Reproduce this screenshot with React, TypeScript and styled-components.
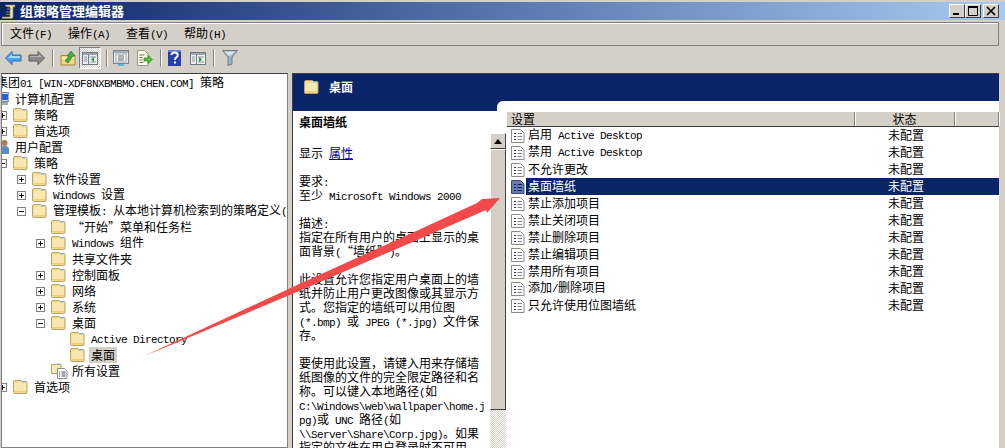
import styled, { createGlobalStyle } from "styled-components";

const GlobalStyle = createGlobalStyle`
  html, body {
    margin: 0;
    padding: 0;
    background: #d4d0c8;
  }
  body {
    font-family: "Noto Sans CJK SC", "Liberation Sans", sans-serif;
    font-size: 12px;
    color: #000000;
    text-spacing-trim: space-all;
  }
`;

const Window = styled.div`
  position: relative;
  width: 1005px;
  height: 448px;
  overflow: hidden;
  display: flex;
  flex-direction: column;
  background: #d4d0c8;
`;

const TitleBar = styled.div`
  height: 18px;
  margin-top: 2px;
  padding: 0 5px 0 2px;
  display: flex;
  align-items: center;
  gap: 4px;
  background: linear-gradient(90deg, #0a246a 0%, #a6caf0 100%);
  color: #ffffff;
  font-weight: 700;
  font-size: 13px;
`;

const TitleText = styled.span`
  flex: 1;
  line-height: 18px;
`;

const CaptionGroup = styled.div`
  display: flex;
  margin-right: 1px;
`;

const CaptionButton = styled.div<{ $gap?: boolean }>`
  width: 16px;
  height: 14px;
  margin-left: ${(p) => (p.$gap ? "2px" : "0")};
  box-sizing: border-box;
  background: #d4d0c8;
  border: 1px solid;
  border-color: #ffffff #404040 #404040 #ffffff;
  display: flex;
  align-items: center;
  justify-content: center;
`;

const MenuBar = styled.div`
  height: 22px;
  margin: 2px 6px 0 1px;
  display: flex;
  align-items: center;
  border: 1px solid #808080;
  box-shadow: inset 1px 1px 0 #ffffff;
`;

const MenuItem = styled.span`
  padding: 0 8px;
  line-height: 20px;
`;

const ToolBar = styled.div`
  height: 24px;
  margin-right: 6px;
  display: flex;
  align-items: center;
`;

const ToolIcon = styled.span<{ $gap: number }>`
  display: flex;
  margin-left: ${(p) => p.$gap}px;
`;

const PressedTool = styled.span<{ $gap: number }>`
  width: 22px;
  height: 22px;
  margin-left: ${(p) => p.$gap}px;
  box-sizing: border-box;
  display: flex;
  align-items: center;
  justify-content: center;
  border: 1px solid;
  border-color: #808080 #ffffff #ffffff #808080;
  background-color: #ffffff;
  background-image: repeating-conic-gradient(#d4d0c8 0 25%, #ffffff 0 50%);
  background-size: 2px 2px;
`;

const ToolSep = styled.span<{ $gap: number }>`
  width: 1px;
  height: 18px;
  margin-left: ${(p) => p.$gap}px;
  background: #808080;
  border-right: 1px solid #ffffff;
`;

const Body = styled.div`
  flex: 1;
  min-height: 0;
  margin: 3px 6px 0 1px;
  display: flex;
`;

const TreePane = styled.div`
  width: 285px;
  flex: none;
  background: #ffffff;
  border: 1px solid;
  border-color: #404040 #808080 #808080 #808080;
  overflow: hidden;
`;

const TreeList = styled.div`
  padding-top: 1px;
`;

const TreeRow = styled.div<{ $offset: number }>`
  height: 16px;
  margin-left: ${(p) => p.$offset}px;
  display: flex;
  align-items: center;
  white-space: nowrap;
`;

const Expander = styled.span`
  width: 9px;
  height: 9px;
  flex: none;
  margin-right: 6px;
  box-sizing: border-box;
  border: 1px solid #808080;
  background: #ffffff;
  display: flex;
  align-items: center;
  justify-content: center;
  position: relative;
`;

const ExpanderH = styled.i`
  width: 5px;
  height: 1px;
  background: #000000;
`;

const ExpanderV = styled.i`
  position: absolute;
  left: 3px;
  top: 1px;
  width: 1px;
  height: 5px;
  background: #000000;
`;

const ExpanderSpace = styled.span`
  width: 15px;
  flex: none;
`;

const TreeLabel = styled.span<{ $active?: boolean }>`
  margin-left: 4px;
  padding: 0 2px;
  line-height: 16px;
  background: ${(p) => (p.$active ? "#d4d0c8" : "transparent")};
`;

const RootLabel = styled.span`
  margin-left: -6px;
  line-height: 16px;
  white-space: nowrap;
`;

const Splitter = styled.div`
  width: 4px;
  flex: none;
  background: #d4d0c8;
`;

const ResultPane = styled.div`
  flex: 1;
  min-width: 0;
  display: flex;
  flex-direction: column;
  background: #0a246a;
  border: 1px solid #404040;
  border-width: 1px 0 0 1px;
`;

const PaneHeader = styled.div`
  height: 27px;
  flex: none;
  box-sizing: border-box;
  padding: 0 0 2px 11px;
  display: flex;
  align-items: center;
  gap: 10px;
  color: #ffffff;
  font-weight: 700;
`;

const Extended = styled.div`
  flex: 1;
  min-height: 0;
  display: flex;
`;

const Details = styled.div`
  width: 197px;
  flex: none;
  margin-top: 10px;
  padding: 3px 0 0 6px;
  box-sizing: border-box;
  background: #ffffff;
`;

const DetailTitle = styled.div`
  font-weight: 700;
  line-height: 16px;
  margin-bottom: 16px;
`;

const DetailLine = styled.div`
  height: 14px;
  line-height: 14px;
  white-space: nowrap;
`;

const DetailLink = styled.a`
  color: #000080;
  text-decoration: underline;
`;

const Gutter = styled.div`
  width: 16px;
  flex: none;
  display: flex;
  flex-direction: column;
  background: #ffffff;
`;

const GutterCap = styled.div`
  height: 10px;
  flex: none;
  margin-bottom: 22px;
  background: #0a246a;
  position: relative;

  &::after {
    content: "";
    position: absolute;
    left: 7px;
    right: 0;
    top: 0;
    bottom: 0;
    background: #ffffff;
    border-top-left-radius: 6px;
  }
`;

const ScrollButton = styled.div`
  height: 16px;
  flex: none;
  box-sizing: border-box;
  background: #d4d0c8;
  border: 1px solid;
  border-color: #ffffff #404040 #404040 #ffffff;
  display: flex;
  align-items: center;
  justify-content: center;
`;

const ScrollThumb = styled(ScrollButton)`
  height: 261px;
`;

const ScrollTrack = styled.div`
  flex: 1;
  background-color: #ffffff;
  background-image: repeating-conic-gradient(#d4d0c8 0 25%, #ffffff 0 50%);
  background-size: 2px 2px;
`;

const ListColumn = styled.div`
  flex: 1;
  min-width: 0;
  padding-top: 11px;
  background: #ffffff;
`;

const ListHeader = styled.div`
  height: 14px;
  margin-left: 1px;
  display: flex;
  border-bottom: 1px solid #404040;
  background: #d4d0c8;
`;

const HeaderCell = styled.div<{ $width: number; $center?: boolean }>`
  width: ${(p) => p.$width}px;
  flex: none;
  box-sizing: border-box;
  padding-left: ${(p) => (p.$center ? "0" : "4px")};
  text-align: ${(p) => (p.$center ? "center" : "left")};
  line-height: 14px;
  border-right: 1px solid #808080;
  box-shadow: 1px 0 0 #ffffff;
`;

const ListRow = styled.div`
  height: 17px;
  padding-left: 5px;
  display: flex;
  align-items: center;
`;

const RowBody = styled.div<{ $selected?: boolean }>`
  flex: 1;
  height: 17px;
  margin-left: 1px;
  padding: 0 0 1px 2px;
  box-sizing: border-box;
  display: flex;
  align-items: center;
  line-height: 16px;
  background: ${(p) => (p.$selected ? "#0a246a" : "transparent")};
  color: ${(p) => (p.$selected ? "#ffffff" : "#000000")};
`;

const SettingName = styled.span`
  width: 360px;
  flex: none;
`;

const Latin = styled.span`
  font-family: "Liberation Mono", monospace;
  font-size: 11px;
  letter-spacing: -0.6px;
  white-space: pre;
`;

const Overlay = styled.svg`
  position: absolute;
  left: 0;
  top: 0;
  pointer-events: none;
`;

// splits mixed text so ascii runs get the narrow mono font
const Mixed = ({ text }: { text: string }) => (
  <>
    {text.split(/([\x20-\x7e]+)/).map((part, i) =>
      i % 2 === 1 ? <Latin key={i}>{part}</Latin> : part
    )}
  </>
);

const FolderIcon = () => (
  <svg width="15" height="14" viewBox="0 0 15 14" style={{ flex: "none" }}>
    <path d="M0.5 2 Q0.5 0.5 2 0.5 H8.5 L9.5 1.5 H13 Q14 1.5 14 2.5 V12.5 Q14 13.5 13 13.5 H1.5 Q0.5 13.5 0.5 12.5Z" fill="#f6dc95" stroke="#b8a468" />
    <path d="M1.5 3 H13 V12.5 H1.5Z" fill="#fbe8b0" />
    <path d="M1.5 11 H13 V12.5 H1.5Z" fill="#eecb78" />
    <rect x="9" y="1" width="3" height="1.4" fill="#6fb1ea" />
  </svg>
);

const AllSettingsIcon = () => (
  <svg width="17" height="16" viewBox="0 0 17 16" style={{ flex: "none", marginRight: -2 }}>
    <path d="M0.5 1.5 H10 V10.5 H0.5Z" fill="#fbe8b0" stroke="#b8a468" />
    <rect x="6" y="0.5" width="3" height="1.4" fill="#6fb1ea" />
    <path d="M6.5 5.5 H13.5 L16 8 V15.5 H6.5Z" fill="#ffffff" stroke="#8a8a8a" />
    <path d="M8 9 h1 M10.5 9 h4 M8 11 h1 M10.5 11 h4 M8 13 h1 M10.5 13 h4" stroke="#444466" />
  </svg>
);

const PolicyIcon = ({ selected }: { selected?: boolean }) => (
  <svg width="14" height="15" viewBox="0 0 14 15" style={{ flex: "none" }}>
    <path d="M0.5 1.5 H9.5 L13 5 V14.5 H0.5Z" fill={selected ? "#6b7aa8" : "#ffffff"} stroke={selected ? "#3a4a80" : "#8a8a8a"} />
    <path d="M3 5.5 h2 M3 8.5 h2 M3 11.5 h2" stroke={selected ? "#0a246a" : "#303050"} />
    <path d="M6.5 5.5 h4.5 M6.5 8.5 h4.5 M6.5 11.5 h4.5" stroke={selected ? "#0a246a" : "#8080a0"} />
  </svg>
);

const ComputerIcon = () => (
  <svg width="7" height="14" viewBox="0 0 7 14" style={{ flex: "none" }}>
    <rect x="-3" y="0.5" width="10" height="9" fill="#d8d8e8" stroke="#808090" />
    <rect x="-2" y="2" width="8" height="6" fill="#2f62d8" />
    <rect x="-1" y="10" width="7" height="3" fill="#a8a8b8" />
  </svg>
);

const UserIcon = () => (
  <svg width="7" height="14" viewBox="0 0 7 14" style={{ flex: "none" }}>
    <circle cx="2.5" cy="3" r="3" fill="#b07a50" />
    <path d="M-2 14 V9 Q-2 6 2.5 6 Q7 6 7 9 V14Z" fill="#5c8cc4" />
  </svg>
);

const BackArrow = () => (
  <svg width="17" height="14" viewBox="0 0 17 14">
    <path d="M0.5 7 L7 0.5 V4 H16 V10 H7 V13.5Z" fill="#4aa3ee" stroke="#2a6cb0" />
    <path d="M3 7 L7 3 V5 H15 V7Z" fill="#a8dcff" />
  </svg>
);

const ForwardArrow = () => (
  <svg width="17" height="14" viewBox="0 0 17 14">
    <path d="M16.5 7 L10 0.5 V4 H1 V10 H10 V13.5Z" fill="#8a8a8a" stroke="#5a5a5a" />
    <path d="M2 5 H11 V3 L14 6 H2Z" fill="#b4b4b4" />
  </svg>
);

const UpFolderIcon = () => (
  <svg width="16" height="16" viewBox="0 0 16 16">
    <path d="M1 5.5 H15 V15 H1Z" fill="#f3d585" stroke="#a08848" />
    <path d="M2 7 H14 V9 H2Z" fill="#fbe8b0" />
    <path d="M5 11 L9 6 H7 L11 1 L15 6 H13 L8 13Z" fill="#3fae3f" stroke="#1f7a1f" strokeWidth="0.6" />
  </svg>
);

const PaneToggleIcon = ({ left }: { left?: boolean }) => (
  <svg width="16" height="13" viewBox="0 0 16 13">
    <rect x="0.5" y="0.5" width="15" height="12" fill="#eef0f4" stroke="#707880" />
    <rect x="1" y="1" width="14" height="2" fill="#9aa4ae" />
    <path d="M6.5 3 V12" stroke="#707880" />
    <path d="M2 5 h3 M2 7 h3 M2 9 h3 M8 5 h6 M8 10 h6" stroke="#8a94a0" />
    <path d={left ? "M12 5 L9 7.5 L12 10Z" : "M9 5 L12 7.5 L9 10Z"} fill="#1f9a3a" />
  </svg>
);

const PropertiesIcon = () => (
  <svg width="16" height="16" viewBox="0 0 16 16">
    <rect x="0.5" y="0.5" width="15" height="13" fill="#e8ecf2" stroke="#7a8490" />
    <rect x="1" y="1" width="14" height="2" fill="#a4aeb8" />
    <rect x="3" y="4" width="10" height="8" fill="#ffffff" stroke="#9aa4ae" />
    <path d="M5 6 h6 M5 8 h6 M5 10 h6" stroke="#5a6470" />
    <rect x="5" y="14" width="6" height="2" fill="#58b4e8" />
  </svg>
);

const ExportIcon = () => (
  <svg width="17" height="16" viewBox="0 0 17 16">
    <path d="M1.5 0.5 H8.5 L12 4 V15.5 H1.5Z" fill="#fffbe8" stroke="#9a9a88" />
    <path d="M3.5 5 h5 M3.5 7.5 h3 M3.5 10 h3 M3.5 12.5 h4" stroke="#6a6a60" />
    <path d="M8 8 H12 V5.5 L16.5 9.5 L12 13.5 V11 H8Z" fill="#58c03c" stroke="#2a8a20" strokeWidth="0.7" />
  </svg>
);

const HelpIcon = () => (
  <svg width="13" height="16" viewBox="0 0 13 16">
    <rect width="13" height="16" fill="#2a3fae" />
    <rect x="0" y="0" width="13" height="2" fill="#6a7fde" />
    <path d="M3.5 5 Q3.5 2.5 6.5 2.5 Q9.8 2.5 9.8 5 Q9.8 6.6 8 7.6 Q7 8.2 7 10" fill="none" stroke="#ffffff" strokeWidth="2" />
    <rect x="6" y="11.5" width="2" height="2" fill="#ffffff" />
  </svg>
);

const FilterIcon = () => (
  <svg width="16" height="16" viewBox="0 0 16 16">
    <path d="M0.5 0.5 H15.5 L10 7 V14 L6 15.5 V7Z" fill="#9fb2be" stroke="#6a7c88" />
    <path d="M2.5 1.5 H13 L9 5.5 H6Z" fill="#d8e4ea" />
  </svg>
);

interface TreeNode {
  level: number;
  label: string;
  expander?: "plus" | "minus";
  kind?: "computer" | "user" | "settings";
  active?: boolean;
}

const treeNodes: TreeNode[] = [
  { level: 0, label: "计算机配置", kind: "computer" },
  { level: 1, label: "策略", expander: "plus" },
  { level: 1, label: "首选项", expander: "plus" },
  { level: 0, label: "用户配置", kind: "user" },
  { level: 1, label: "策略", expander: "minus" },
  { level: 2, label: "软件设置", expander: "plus" },
  { level: 2, label: "Windows 设置", expander: "plus" },
  { level: 2, label: "管理模板: 从本地计算机检索到的策略定义(ADMX 文件)", expander: "minus" },
  { level: 3, label: "“开始”菜单和任务栏" },
  { level: 3, label: "Windows 组件", expander: "plus" },
  { level: 3, label: "共享文件夹" },
  { level: 3, label: "控制面板", expander: "plus" },
  { level: 3, label: "网络", expander: "plus" },
  { level: 3, label: "系统", expander: "plus" },
  { level: 3, label: "桌面", expander: "minus" },
  { level: 4, label: "Active Directory" },
  { level: 4, label: "桌面", active: true },
  { level: 3, label: "所有设置", kind: "settings" },
  { level: 1, label: "首选项", expander: "plus" },
];

const detailLines = [
  "",
  "要求:",
  "至少 Microsoft Windows 2000",
  "",
  "描述:",
  "指定在所有用户的桌面上显示的桌",
  "面背景(“墙纸”)。",
  "",
  "此设置允许您指定用户桌面上的墙",
  "纸并防止用户更改图像或其显示方",
  "式。您指定的墙纸可以用位图",
  "(*.bmp) 或 JPEG (*.jpg) 文件保",
  "存。",
  "",
  "要使用此设置\uff0c请键入用来存储墙",
  "纸图像的文件的完全限定路径和名",
  "称。可以键入本地路径(如",
  "C:\\Windows\\web\\wallpaper\\home.j",
  "pg)或 UNC 路径(如",
  "\\\\Server\\Share\\Corp.jpg)。如果",
  "指定的文件在用户登录时不可用\uff0c",
];

const settings = [
  "启用 Active Desktop",
  "禁用 Active Desktop",
  "不允许更改",
  "桌面墙纸",
  "禁止添加项目",
  "禁止关闭项目",
  "禁止删除项目",
  "禁止编辑项目",
  "禁用所有项目",
  "添加/删除项目",
  "只允许使用位图墙纸",
];

const TreeItem = ({ node }: { node: TreeNode }) => {
  // level 1 sits partly under the pane edge, the tree is scrolled sideways
  const offset = node.kind === "computer" || node.kind === "user" ? 0 : 19 * node.level - 23;
  return (
    <TreeRow $offset={offset}>
      {node.kind === "computer" && <ComputerIcon />}
      {node.kind === "user" && <UserIcon />}
      {!node.kind &&
        (node.expander ? (
          <Expander>
            <ExpanderH />
            {node.expander === "plus" && <ExpanderV />}
          </Expander>
        ) : (
          <ExpanderSpace />
        ))}
      {node.kind === "settings" && <ExpanderSpace />}
      {node.kind === "settings" ? <AllSettingsIcon /> : node.level > 0 && <FolderIcon />}
      <TreeLabel $active={node.active}>
        <Mixed text={node.label} />
      </TreeLabel>
    </TreeRow>
  );
};

const App = () => (
  <Window>
    <GlobalStyle />
    <TitleBar>
      <svg width="14" height="15" viewBox="0 0 14 15">
        <path d="M3 1 H13 V3 H11 V13 Q11 14.5 9 14.5 H1 Q0 14.5 0 13 H8 V3 Q3 3 3 1Z" fill="#f2e4b8" stroke="#8a7a48" strokeWidth="0.7" />
        <path d="M5 5 h4 M4 8 h4 M4 10.5 h4" stroke="#8a7a48" />
      </svg>
      <TitleText>组策略管理编辑器</TitleText>
      <CaptionGroup>
        <CaptionButton>
          <svg width="10" height="10" viewBox="0 0 10 10">
            <rect x="1" y="7" width="6" height="2" fill="#000000" />
          </svg>
        </CaptionButton>
        <CaptionButton>
          <svg width="10" height="10" viewBox="0 0 10 10">
            <path d="M0.5 1.5 H9.5 V9.5 H0.5Z" fill="none" stroke="#000000" />
            <rect x="0" y="0" width="10" height="2" fill="#000000" />
          </svg>
        </CaptionButton>
        <CaptionButton $gap>
          <svg width="10" height="10" viewBox="0 0 10 10">
            <path d="M1 1 L9 9 M9 1 L1 9" stroke="#000000" strokeWidth="1.7" />
          </svg>
        </CaptionButton>
      </CaptionGroup>
    </TitleBar>
    <MenuBar>
      {["文件(F)", "操作(A)", "查看(V)", "帮助(H)"].map((item) => (
        <MenuItem key={item}>
          <Mixed text={item} />
        </MenuItem>
      ))}
    </MenuBar>
    <ToolBar>
      <ToolIcon $gap={5}>
        <BackArrow />
      </ToolIcon>
      <ToolIcon $gap={6}>
        <ForwardArrow />
      </ToolIcon>
      <ToolSep $gap={7} />
      <ToolIcon $gap={6}>
        <UpFolderIcon />
      </ToolIcon>
      <PressedTool $gap={3}>
        <PaneToggleIcon left />
      </PressedTool>
      <ToolSep $gap={5} />
      <ToolIcon $gap={5}>
        <PropertiesIcon />
      </ToolIcon>
      <ToolIcon $gap={7}>
        <ExportIcon />
      </ToolIcon>
      <ToolSep $gap={7} />
      <ToolIcon $gap={6}>
        <HelpIcon />
      </ToolIcon>
      <ToolIcon $gap={9}>
        <PaneToggleIcon />
      </ToolIcon>
      <ToolSep $gap={7} />
      <ToolIcon $gap={7}>
        <FilterIcon />
      </ToolIcon>
    </ToolBar>
    <Body>
      <TreePane>
        <TreeList>
          <TreeRow $offset={0}>
            <RootLabel>
              <Mixed text="集团01 [WIN-XDF8NXBMBMO.CHEN.COM] 策略" />
            </RootLabel>
          </TreeRow>
          {treeNodes.map((node, i) => (
            <TreeItem key={i} node={node} />
          ))}
        </TreeList>
      </TreePane>
      <Splitter />
      <ResultPane>
        <PaneHeader>
          <FolderIcon />
          桌面
        </PaneHeader>
        <Extended>
          <Details>
            <DetailTitle>桌面墙纸</DetailTitle>
            <DetailLine>
              <Mixed text="显示 " />
              <DetailLink href="#">属性</DetailLink>
            </DetailLine>
            {detailLines.map((line, i) => (
              <DetailLine key={i}>
                <Mixed text={line} />
              </DetailLine>
            ))}
          </Details>
          <Gutter>
            <GutterCap />
            <ScrollButton>
              <svg width="8" height="5" viewBox="0 0 8 5">
                <path d="M4 0 L8 5 H0Z" fill="#000000" />
              </svg>
            </ScrollButton>
            <ScrollThumb />
            <ScrollTrack />
          </Gutter>
          <ListColumn>
            <ListHeader>
              <HeaderCell $width={348}>设置</HeaderCell>
              <HeaderCell $width={100} $center>
                状态
              </HeaderCell>
              <HeaderCell $width={44} />
            </ListHeader>
            {settings.map((name, i) => (
              <ListRow key={name}>
                <PolicyIcon selected={i === 3} />
                <RowBody $selected={i === 3}>
                  <SettingName>
                    <Mixed text={name} />
                  </SettingName>
                  未配置
                </RowBody>
              </ListRow>
            ))}
          </ListColumn>
        </Extended>
      </ResultPane>
    </Body>
    <Overlay width="1005" height="448" viewBox="0 0 1005 448">
      <path
        d="M144 356 L183 338 L297 285 L400 238.4 L477 203 L482 199 L500 198 L487 213 L486 210 L400 247.4 L297 292 L183 340 Z"
        fill="#f24a4a"
      />
    </Overlay>
  </Window>
);

export default App;
